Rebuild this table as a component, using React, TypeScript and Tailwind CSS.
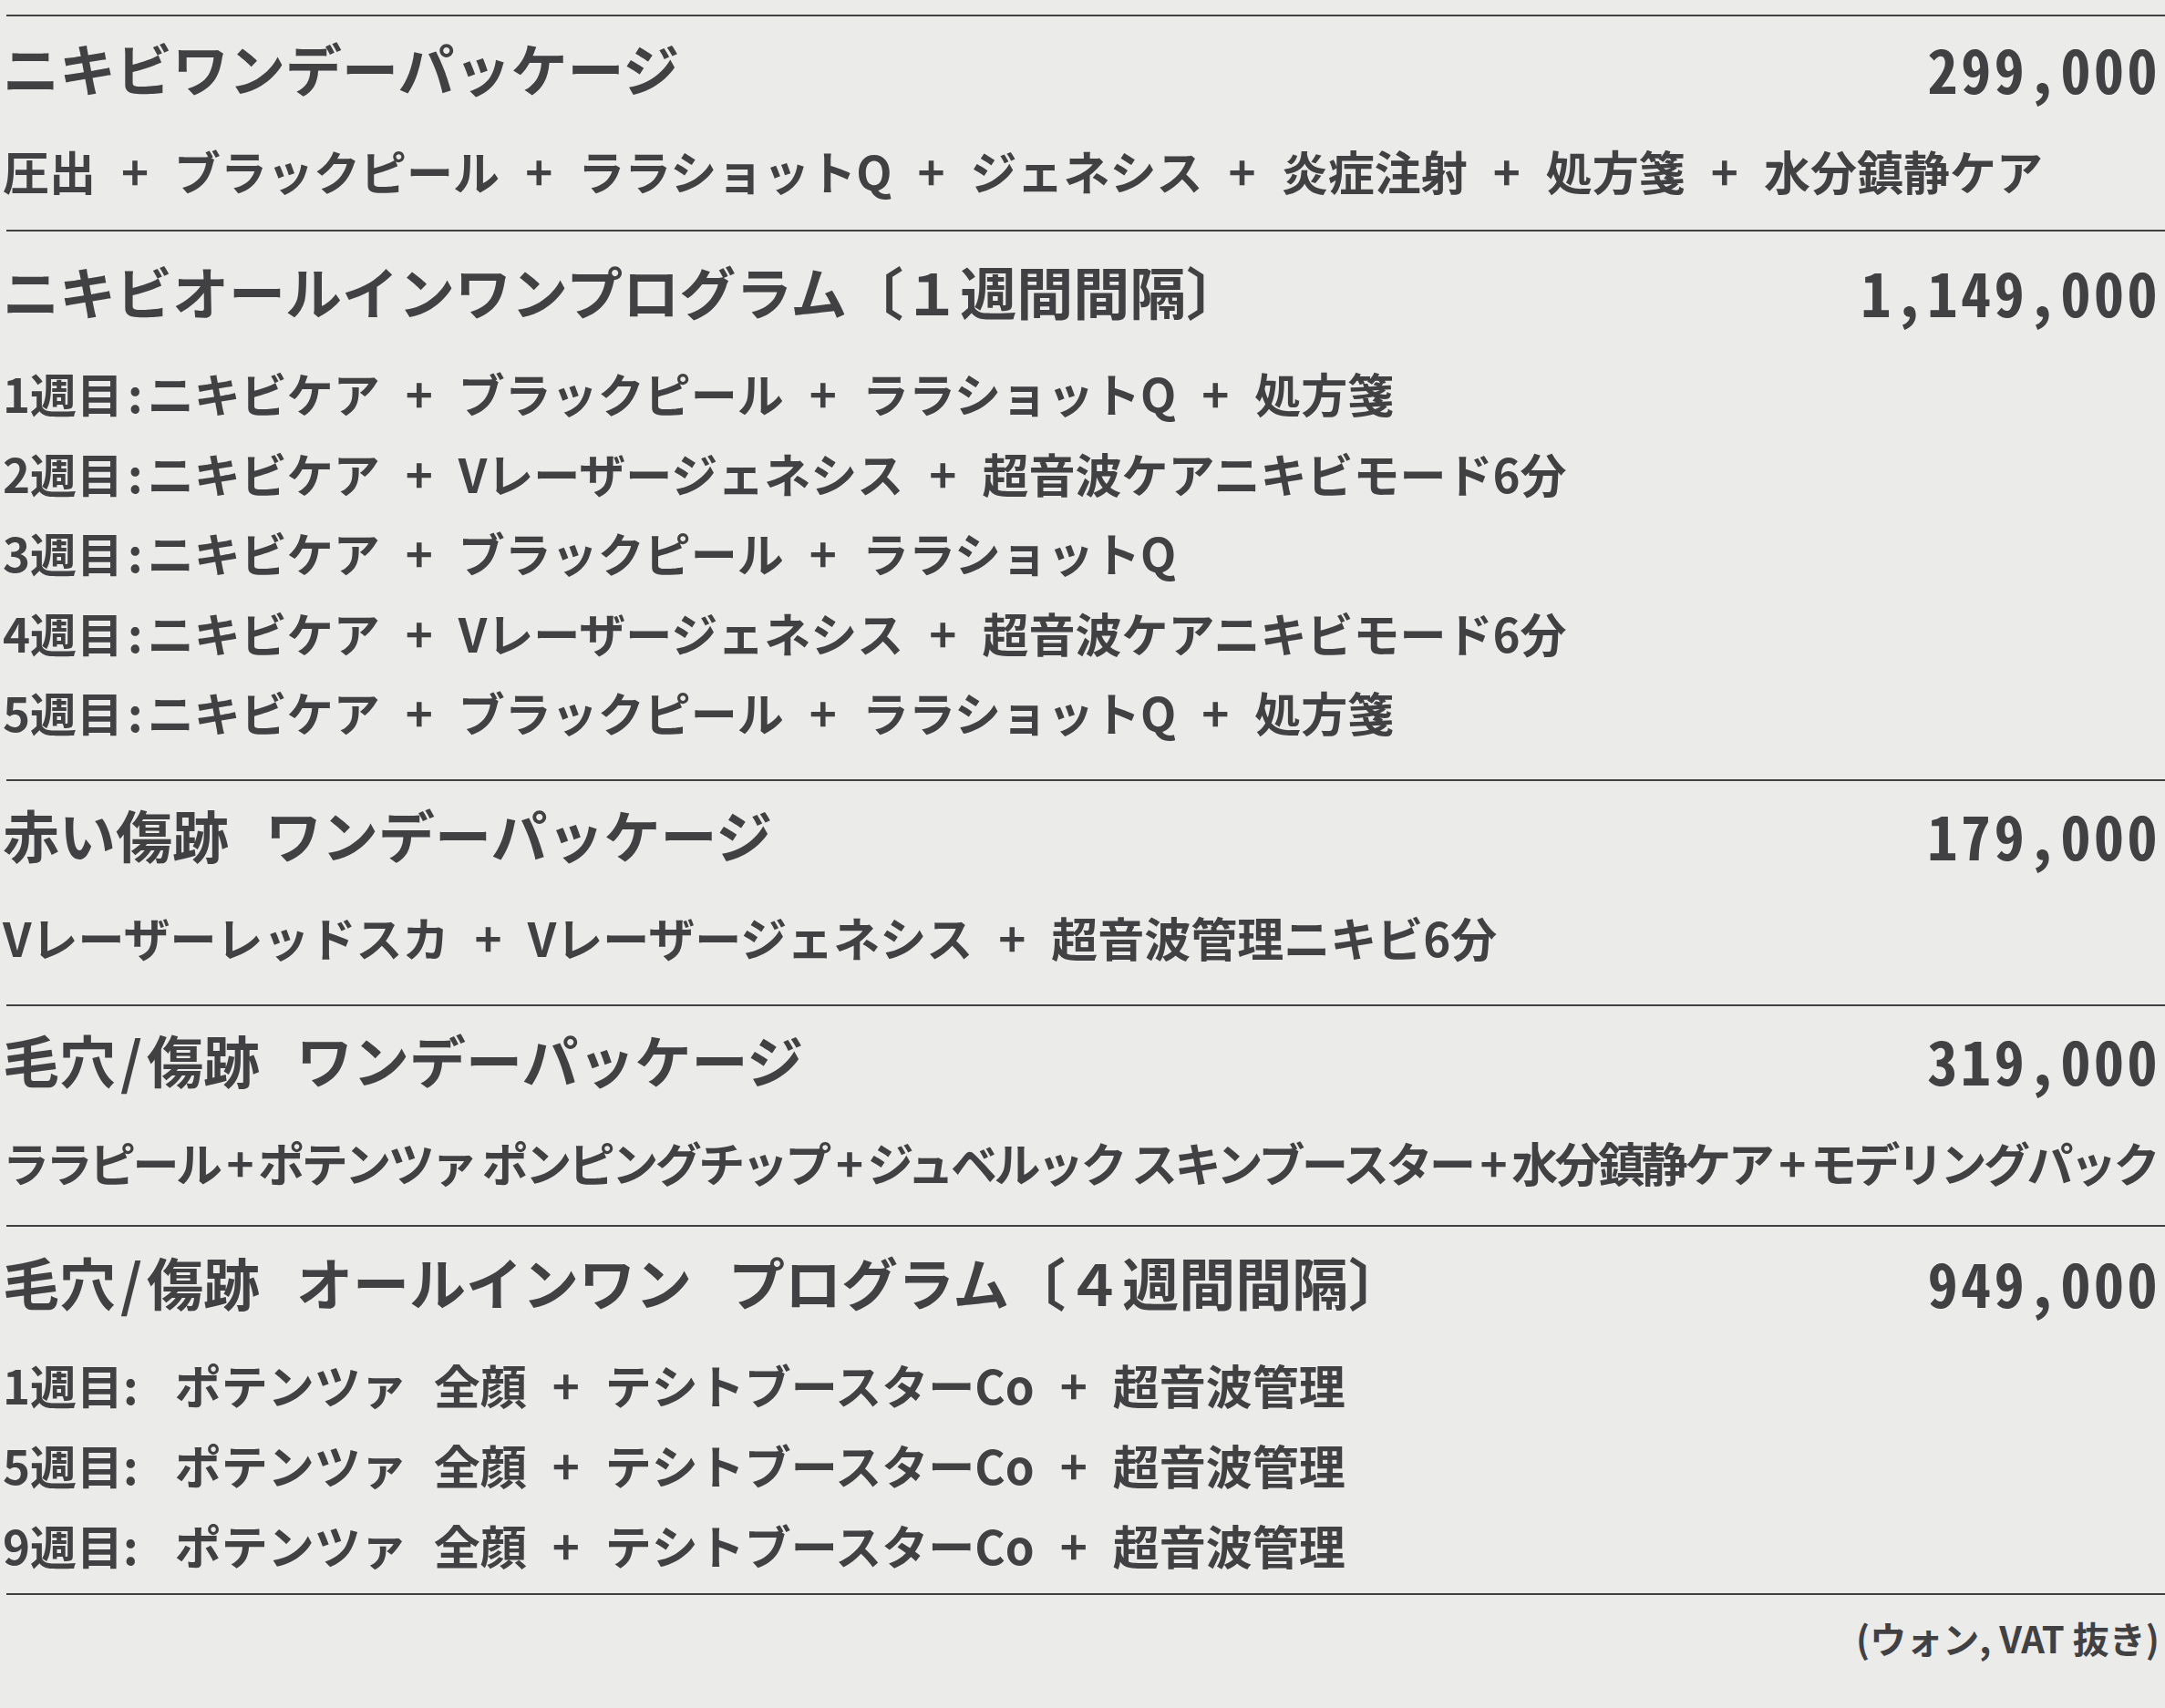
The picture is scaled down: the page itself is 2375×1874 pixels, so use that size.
import { Fragment, type ReactNode } from 'react'
import clsx from 'clsx'

const jp = "font-['Noto_Sans_CJK_JP',sans-serif]"

function Plus() {
  return <span className="mx-[28px]">+</span>
}

function Gap({ w }: { w: string }) {
  return <span className={clsx('inline-block', w)} />
}

function Slash() {
  return <span className="mx-[5px]">/</span>
}

function Week({ n, children }: { n: string; children: ReactNode }) {
  return (
    <>
      {n}週目<span className="px-[5px]">:</span>
      {children}
    </>
  )
}

function Row({ items }: { items: ReactNode[] }) {
  return (
    <div className="flex items-center whitespace-nowrap">
      {items.map((t, i) => (
        <Fragment key={i}>
          {i > 0 && <Plus />}
          <span>{t}</span>
        </Fragment>
      ))}
    </div>
  )
}

interface SectionProps {
  title: ReactNode
  price: string
  className: string
  rowsClass?: string
  children: ReactNode
}

function Section({ title, price, className, rowsClass = 'leading-[88px]', children }: SectionProps) {
  return (
    <section className={clsx('ml-[7px] border-t-2 border-[#414042]', className)}>
      <div className="-ml-[4px] flex items-center justify-between pr-[5px] text-[62px] leading-[80px]">
        <h2 className="whitespace-nowrap">{title}</h2>
        <span className="text-[66px] tracking-[3.5px] [font-feature-settings:'hwid']">{price}</span>
      </div>
      <div className={clsx('-ml-[4px] mt-[29px] text-[51px]', rowsClass)}>{children}</div>
    </section>
  )
}

export default function App() {
  return (
    <div className={clsx('min-h-screen bg-[#ebebe9] pt-[16px] font-bold text-[#414042]', jp)}>
      <Section title="ニキビワンデーパッケージ" price="299,000" className="pt-[16px] pb-[21px]">
        <Row items={['圧出', 'ブラックピール', 'ララショットQ', 'ジェネシス', '炎症注射', '処方箋', '水分鎮静ケア']} />
      </Section>

      <Section
        title="ニキビオールインワンプログラム〔１週間間隔〕"
        price="1,149,000"
        className="pt-[25px] pb-[29px]"
        rowsClass="leading-[87.5px]"
      >
        <Row items={[<Week n="1">ニキビケア</Week>, 'ブラックピール', 'ララショットQ', '処方箋']} />
        <Row items={[<Week n="2">ニキビケア</Week>, 'Vレーザージェネシス', '超音波ケアニキビモード6分']} />
        <Row items={[<Week n="3">ニキビケア</Week>, 'ブラックピール', 'ララショットQ']} />
        <Row items={[<Week n="4">ニキビケア</Week>, 'Vレーザージェネシス', '超音波ケアニキビモード6分']} />
        <Row items={[<Week n="5">ニキビケア</Week>, 'ブラックピール', 'ララショットQ', '処方箋']} />
      </Section>

      <Section
        title={
          <>
            赤い傷跡
            <Gap w="w-[40px]" />
            ワンデーパッケージ
          </>
        }
        price="179,000"
        className="pt-[18px] pb-[30px]"
      >
        <Row items={['Vレーザーレッドスカ', 'Vレーザージェネシス', '超音波管理ニキビ6分']} />
      </Section>

      <Section
        title={
          <>
            毛穴<Slash />傷跡
            <Gap w="w-[40px]" />
            ワンデーパッケージ
          </>
        }
        price="319,000"
        className="pt-[18px] pb-[25px]"
      >
        <div className="whitespace-nowrap tracking-[-3.5px]">
          ララピール + ポテンツァ ポンピングチップ + ジュベルック スキンブースター + 水分鎮静ケア + モデリングパック
        </div>
      </Section>

      <Section
        title={
          <>
            毛穴<Slash />傷跡
            <Gap w="w-[40px]" />
            オールインワン
            <Gap w="w-[40px]" />
            プログラム〔４週間間隔〕
          </>
        }
        price="949,000"
        className="pt-[20px] pb-[9px]"
      >
        {['1', '5', '9'].map((w) => (
          <Row
            key={w}
            items={[
              <>
                {w}週目:
                <Gap w="w-[40px]" />
                ポテンツァ
                <Gap w="w-[29px]" />
                全顔
              </>,
              'テシトブースターCo',
              '超音波管理',
            ]}
          />
        ))}
      </Section>

      <div className="ml-[7px] border-t-2 border-[#414042] pt-[21px] pr-[6px] text-right text-[40px] leading-[52px]">
        (ウォン, VAT 抜き)
      </div>
    </div>
  )
}
